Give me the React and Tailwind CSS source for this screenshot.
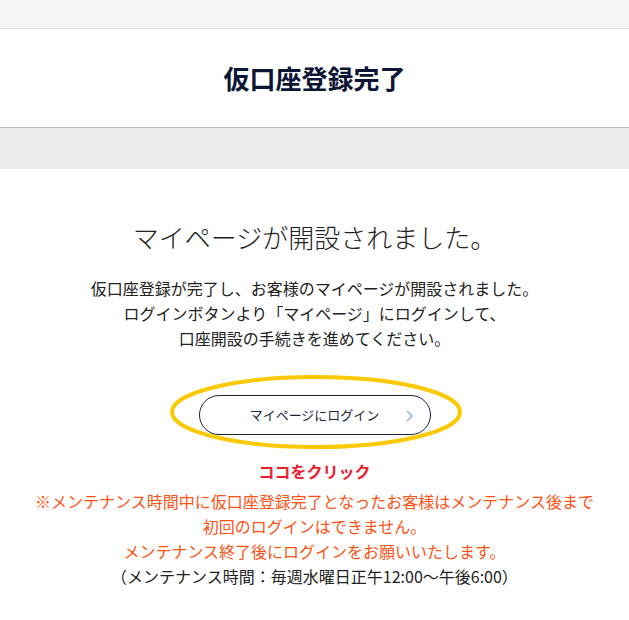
const jp = { fontFamily: '"Noto Sans CJK JP", "Noto Sans", sans-serif' };

const LoginButton = () => (
    <div className="relative mt-[44px]">
        <svg className="absolute -left-[30px] -top-[21px] pointer-events-none" width="294" height="76" viewBox="0 0 294 76">
            <ellipse cx="147" cy="38" rx="144" ry="35" fill="none" stroke="#fcc800" strokeWidth="4" />
        </svg>
        <button className="relative flex items-center justify-center w-[232px] h-[40px] rounded-full border border-[#1c2240] bg-white text-[13px] text-[#1c2240]">
            マイページにログイン
            <svg className="absolute right-[17px] top-[14px]" width="7" height="12" viewBox="0 0 7 12">
                <path d="M1 1l5 5-5 5" fill="none" stroke="#7da9d8" strokeWidth="1.3" />
            </svg>
        </button>
    </div>
);

export default function App() {
    return (
        <div className="min-h-screen bg-white" style={jp}>
            <div className="h-[29px] bg-[#f5f5f5] border-b border-[#e8e8e8]" />
            <div className="h-[99px] flex items-center justify-center border-b border-[#bdbdbd]">
                <h1 className="text-[26px] font-bold text-[#0b1535] mt-[-2px]">仮口座登録完了</h1>
            </div>
            <div className="h-[41px] bg-[#ececec]" />
            <div className="flex flex-col items-center pt-[48px]">
                <h2 className="text-[26px] leading-[39px] text-[#222] font-light">マイページが開設されました。</h2>
                <p className="mt-[20px] text-[16px] leading-[25px] text-[#222] text-center">
                    仮口座登録が完了し、お客様のマイページが開設されました。<br />
                    ログインボタンより「マイページ」にログインして、<br />
                    口座開設の手続きを進めてください。
                </p>
                <LoginButton />
                <p className="mt-[24px] text-[16px] leading-[24px] font-bold text-[#e8202f]">ココをクリック</p>
                <div className="mt-[6px] text-[16px] leading-[25px] text-center">
                    <p className="text-[#ff5214]">
                        ※メンテナンス時間中に仮口座登録完了となったお客様はメンテナンス後まで<br />
                        初回のログインはできません。<br />
                        メンテナンス終了後にログインをお願いいたします。
                    </p>
                    <p className="text-[#222]">（メンテナンス時間：毎週水曜日正午12:00～午後6:00）</p>
                </div>
            </div>
        </div>
    );
}
